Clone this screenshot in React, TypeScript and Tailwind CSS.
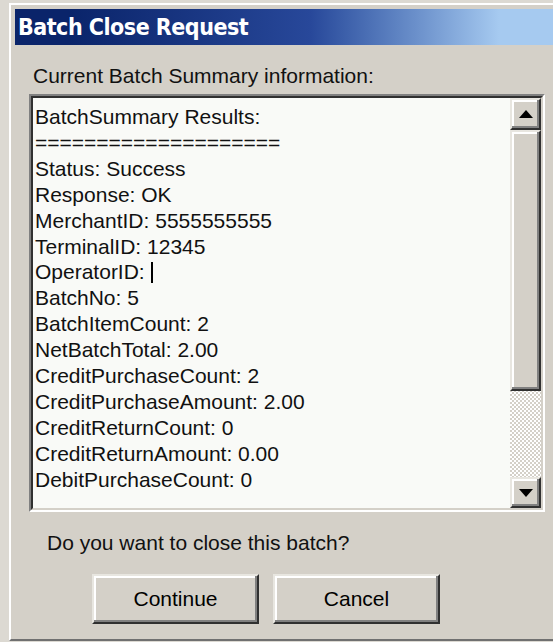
import React from 'react';

const summaryLines = [
  'BatchSummary Results:',
  '====================',
  'Status: Success',
  'Response: OK',
  'MerchantID: 5555555555',
  'TerminalID: 12345',
  'OperatorID: ',
  'BatchNo: 5',
  'BatchItemCount: 2',
  'NetBatchTotal: 2.00',
  'CreditPurchaseCount: 2',
  'CreditPurchaseAmount: 2.00',
  'CreditReturnCount: 0',
  'CreditReturnAmount: 0.00',
  'DebitPurchaseCount: 0',
];

const Arrow: React.FC<{ up?: boolean }> = ({ up }) => (
  <svg width="14" height="8" viewBox="0 0 14 8">
    <path d={up ? 'M7 0 L14 8 L0 8 Z' : 'M0 0 L14 0 L7 8 Z'} fill="#000" />
  </svg>
);

// raised 3d edge used by buttons and scrollbar parts
const raised =
  'border-2 border-t-[#e8e6e0] border-l-[#e8e6e0] border-r-[#303030] border-b-[#303030] shadow-[inset_-2px_-2px_0_#808080,inset_2px_2px_0_#ffffff]';

const Button: React.FC<{ label: string }> = ({ label }) => (
  <button
    className={`w-[167px] h-[50px] bg-[#d4d0c8] text-[21px] text-black flex items-center justify-center ${raised}`}
  >
    {label}
  </button>
);

export default function App() {
  return (
    <div
      className="w-[553px] h-[642px] bg-[#dcd9d2] pt-[3px] pl-[9px] overflow-hidden"
      style={{ fontFamily: '"Liberation Sans", Arial, sans-serif' }}
    >
      <div className="h-[638px] bg-[#d4d0c8] border-l-2 border-t-2 border-white pt-[4px] pl-[4px] border-b-2 border-b-[#707070]">
        {/* title bar */}
        <div className="h-[36px] flex items-center pl-[3px] bg-linear-to-r from-[#0a246a] from-10% via-[#28489a] via-55% to-[#a6caf0] to-90%">
          <span
            className="text-white font-bold text-[23px] tracking-[-0.5px] leading-none font-stretch-condensed"
            style={{ fontFamily: '"DejaVu Sans Condensed", "DejaVu Sans", sans-serif' }}
          >
            Batch Close Request
          </span>
        </div>

        <div className="pl-[14px] pt-[18px]">
          <div className="text-[21px] leading-[26px] text-[#111] pl-[4px]">
            Current Batch Summary information:
          </div>

          {/* summary box */}
          <div className="mt-[5px] w-[516px] h-[418px] flex border-2 border-t-[#808080] border-l-[#808080] border-r-white border-b-white">
            <div className="flex-1 flex border-2 border-t-[#303030] border-l-[#303030] border-r-[#d4d0c8] border-b-[#d4d0c8] bg-[#f9faf7]">
              <div className="flex-1 pt-[6px] pl-[2px] overflow-hidden text-[21px] leading-[25.9px] text-[#111] whitespace-pre">
                {summaryLines.map((line) => (
                  <div key={line}>
                    {line}
                    {line.startsWith('OperatorID') && (
                      <span className="inline-block w-[2px] h-[21px] bg-black align-[-4px]" />
                    )}
                  </div>
                ))}
              </div>

              {/* vertical scrollbar */}
              <div className="w-[31px] flex flex-col bg-[repeating-conic-gradient(#ffffff_0_25%,#d4d0c8_0_50%)] bg-[length:4px_4px]">
                <div className={`h-[32px] bg-[#d4d0c8] flex items-center justify-center ${raised}`}>
                  <Arrow up />
                </div>
                <div className={`h-[261px] bg-[#d4d0c8] ${raised}`} />
                <div className="flex-1" />
                <div className={`h-[31px] bg-[#d4d0c8] flex items-center justify-center ${raised}`}>
                  <Arrow />
                </div>
              </div>
            </div>
          </div>

          <div className="mt-[18px] pl-[18px] text-[21px] leading-[26px] text-[#111]">
            Do you want to close this batch?
          </div>

          <div className="mt-[18px] pl-[63px] flex gap-[14px]">
            <Button label="Continue" />
            <Button label="Cancel" />
          </div>
        </div>
      </div>
    </div>
  );
}
